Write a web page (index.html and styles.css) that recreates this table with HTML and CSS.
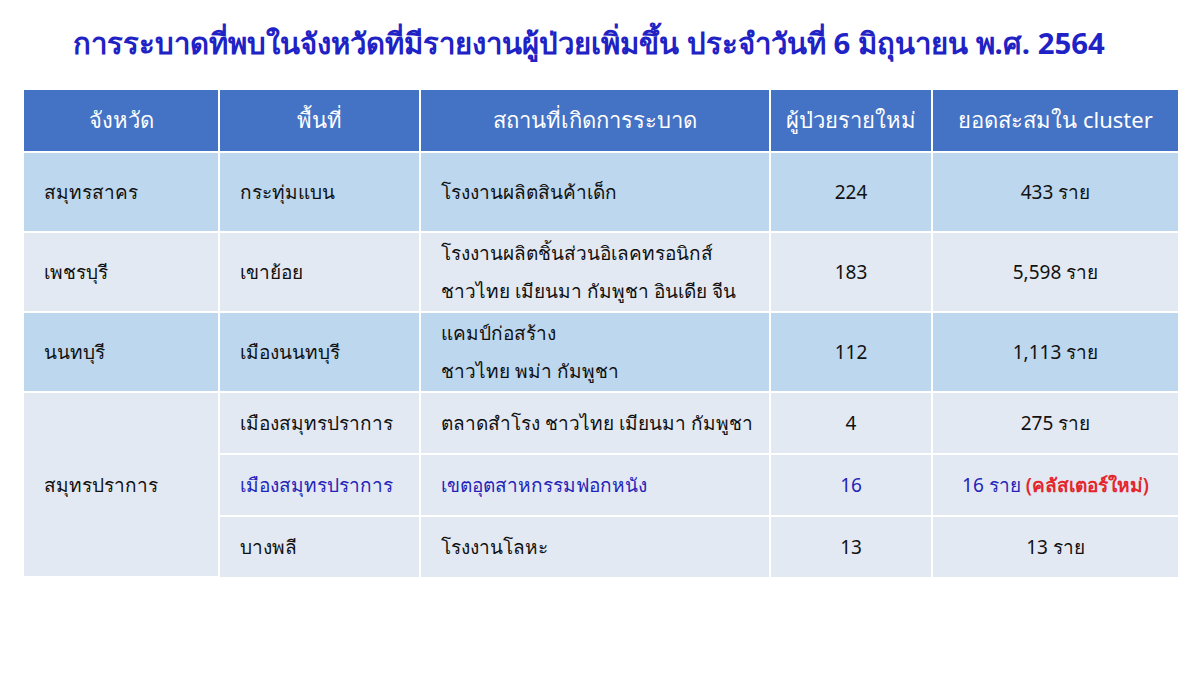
FILE: index.html
```html
<!DOCTYPE html>
<html lang="th">
<head>
<meta charset="utf-8">
<link rel="stylesheet" href="styles.css">
</head>
<body>
<div class="page">
  <h1 class="title">การระบาดที่พบในจังหวัดที่มีรายงานผู้ป่วยเพิ่มขึ้น ประจำวันที่ 6 มิถุนายน พ.ศ. 2564</h1>
  <table class="grid">
    <colgroup>
      <col class="c1"><col class="c2"><col class="c3"><col class="c4"><col class="c5">
    </colgroup>
    <thead>
      <tr>
        <th>จังหวัด</th>
        <th>พื้นที่</th>
        <th>สถานที่เกิดการระบาด</th>
        <th>ผู้ป่วยรายใหม่</th>
        <th>ยอดสะสมใน cluster</th>
      </tr>
    </thead>
    <tbody>
      <tr class="dark tall">
        <td>สมุทรสาคร</td>
        <td>กระทุ่มแบน</td>
        <td>โรงงานผลิตสินค้าเด็ก</td>
        <td class="num">224</td>
        <td class="num">433 ราย</td>
      </tr>
      <tr class="light tall">
        <td>เพชรบุรี</td>
        <td>เขาย้อย</td>
        <td class="two">โรงงานผลิตชิ้นส่วนอิเลคทรอนิกส์<br>ชาวไทย เมียนมา กัมพูชา อินเดีย จีน</td>
        <td class="num">183</td>
        <td class="num">5,598 ราย</td>
      </tr>
      <tr class="dark tall">
        <td>นนทบุรี</td>
        <td>เมืองนนทบุรี</td>
        <td class="two">แคมป์ก่อสร้าง<br>ชาวไทย พม่า กัมพูชา</td>
        <td class="num">112</td>
        <td class="num">1,113 ราย</td>
      </tr>
      <tr class="light short">
        <td rowspan="3">สมุทรปราการ</td>
        <td>เมืองสมุทรปราการ</td>
        <td>ตลาดสำโรง ชาวไทย เมียนมา กัมพูชา</td>
        <td class="num">4</td>
        <td class="num">275 ราย</td>
      </tr>
      <tr class="light short blue">
        <td>เมืองสมุทรปราการ</td>
        <td>เขตอุตสาหกรรมฟอกหนัง</td>
        <td class="num">16</td>
        <td class="num">16 ราย <span class="red">(คลัสเตอร์ใหม่)</span></td>
      </tr>
      <tr class="light short">
        <td>บางพลี</td>
        <td>โรงงานโลหะ</td>
        <td class="num">13</td>
        <td class="num">13 ราย</td>
      </tr>
    </tbody>
  </table>
</div>
</body>
</html>
```

FILE: styles.css
```css
html, body {
  margin: 0;
  padding: 0;
  background: #ffffff;
}
body {
  font-family: "Noto Sans", "DejaVu Sans", "Liberation Sans", sans-serif;
  color: #111111;
}
.page {
  width: 1200px;
  height: 675px;
  padding: 0 22px 0 24px;
  box-sizing: border-box;
}
.title {
  margin: 0;
  padding-top: 22px;
  padding-right: 24px;
  height: 90px;
  box-sizing: border-box;
  text-align: center;
  font-size: 29.3px;
  font-weight: bold;
  color: #1f22c4;
  line-height: 42px;
  white-space: nowrap;
}
.grid {
  width: 1154px;
  border-collapse: collapse;
  table-layout: fixed;
  font-size: 19px;
}
.c1 { width: 195px; }
.c2 { width: 201px; }
.c3 { width: 350px; }
.c4 { width: 162px; }
.c5 { width: 246px; }
.grid th, .grid td {
  border: 2px solid #ffffff;
  padding: 0 0 0 20px;
  vertical-align: middle;
  white-space: nowrap;
}
.grid tr > :first-child { border-left: 0; }
.grid tr > :last-child { border-right: 0; }
.grid thead th {
  border-top: 0;
  background: #4472c4;
  color: #ffffff;
  font-weight: normal;
  font-size: 22px;
  text-align: center;
  padding: 0;
  height: 61px;
}
.grid .dark td { background: #bdd7ee; }
.grid .light td { background: #e3e9f2; }
.grid .tall td { height: 78px; }
.grid .short td { height: 60px; }
.grid td.two { line-height: 38px; }
.grid td.num {
  text-align: center;
  padding: 0;
}
.grid .blue td { color: #2424b8; }
.grid .blue td .red { color: #e3262c; font-weight: 600; }
.grid tbody tr:last-child td { border-bottom: 0; }
```
